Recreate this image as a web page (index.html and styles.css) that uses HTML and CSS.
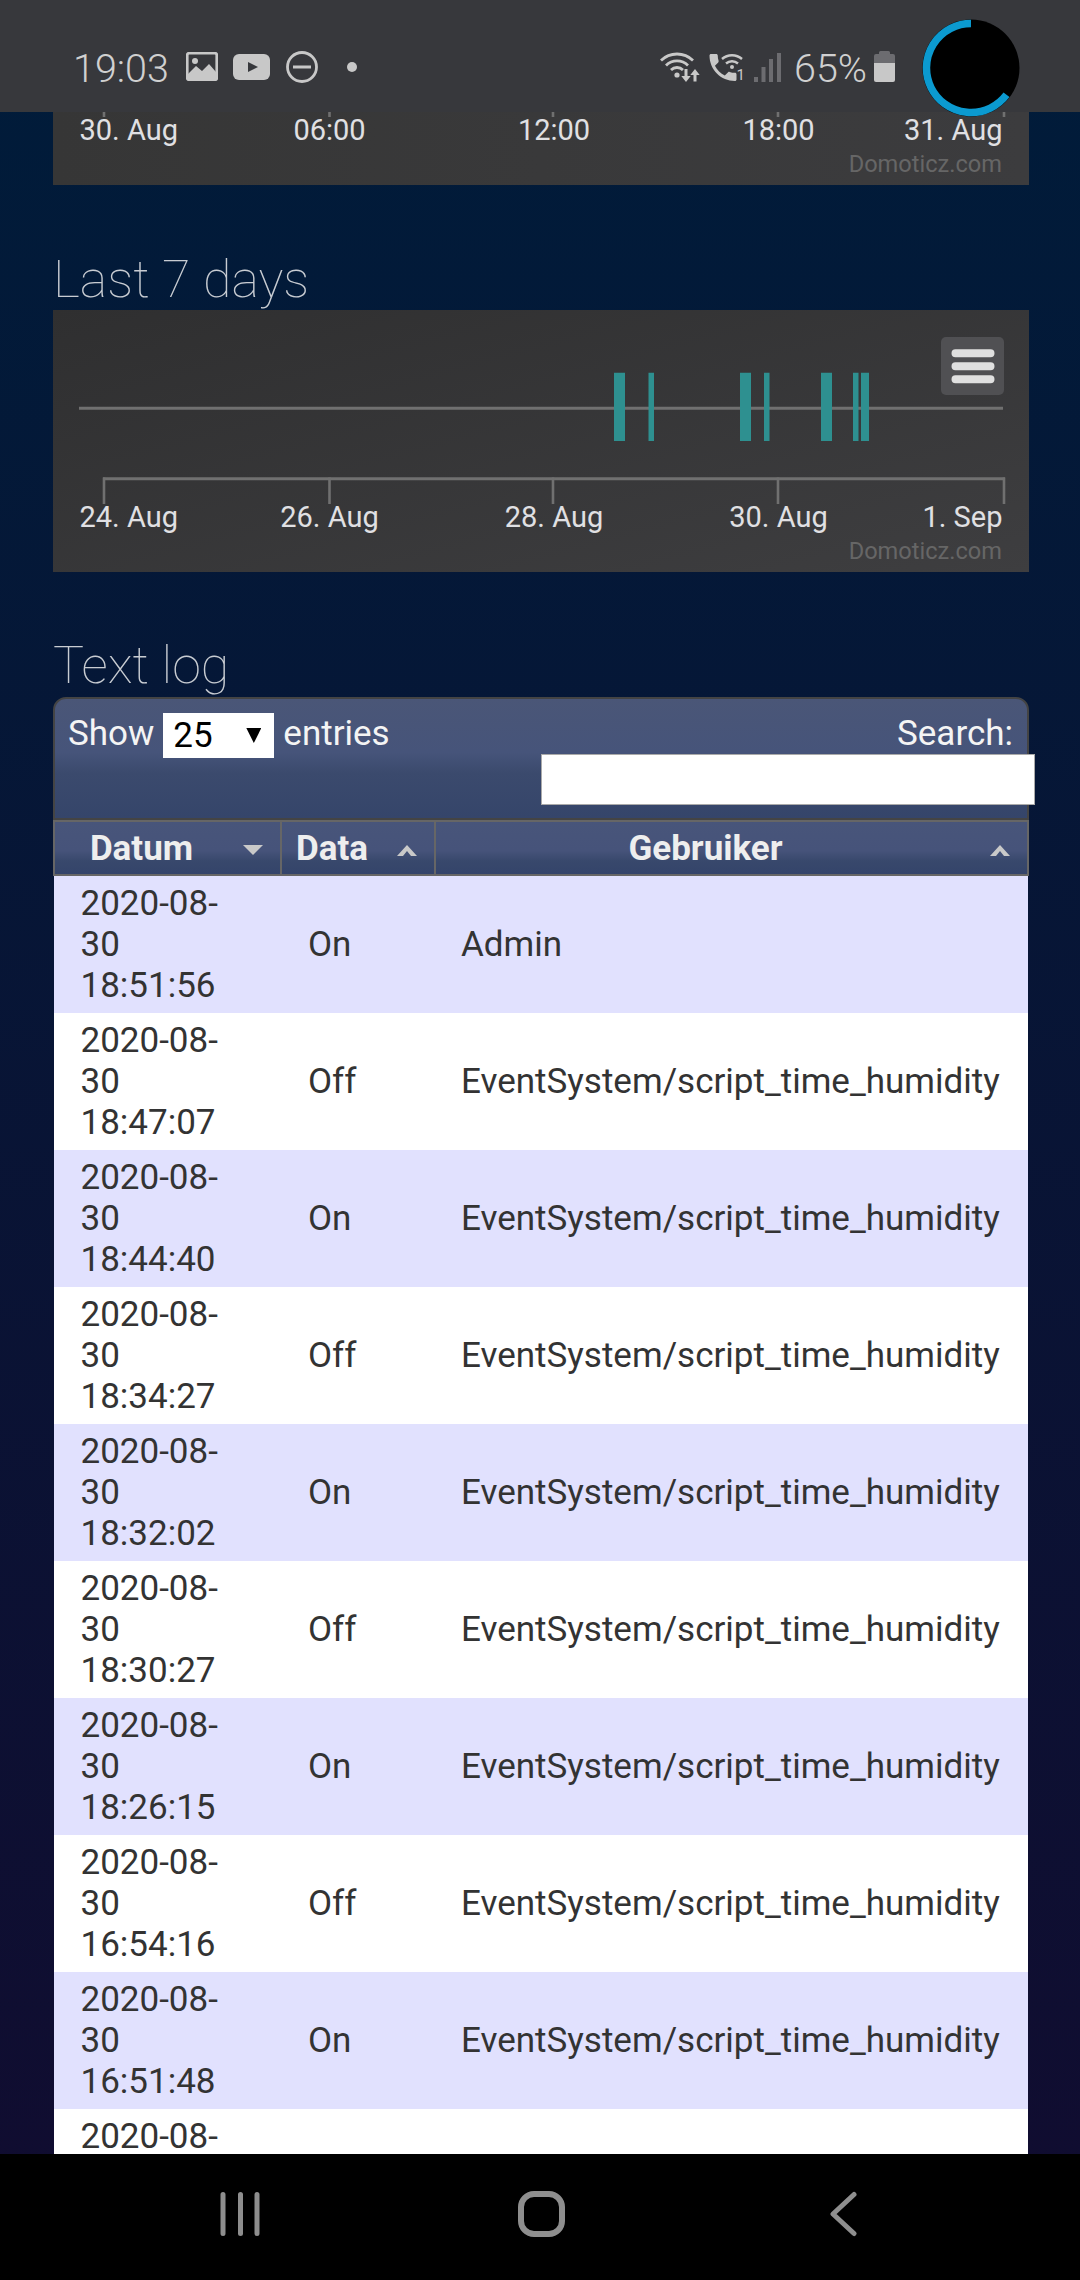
FILE: index.html
```html
<!DOCTYPE html>
<html lang="en">
<head>
<meta charset="utf-8">
<title>Domoticz log</title>
<link rel="stylesheet" href="styles.css">
</head>
<body>
<div class="screen">
  <header class="status">
    <div class="status-left">
      <span class="clock">19:03</span>
      <svg class="ic-image" width="32" height="29" viewBox="0 0 32 29"><rect x="1.200" y="1.200" width="29.600" height="26.600" rx="2" class="ic-stroke"/><circle cx="9" cy="9" r="3" class="ic-fill"/><path d="M2 25 L2 22 L10 14 L16 19 L23 12 L30 20 L30 27 L2 27Z" class="ic-fill"/></svg>
      <svg class="ic-yt" width="37" height="26" viewBox="0 0 37 26"><rect width="37" height="26" rx="6" class="ic-fill"/><path d="M15 8 L25 13 L15 18Z" class="ic-dark"/></svg>
      <svg class="ic-dnd" width="32" height="32" viewBox="0 0 32 32"><circle cx="16" cy="16" r="14.500" class="ic-stroke"/><rect x="7" y="14.500" width="18" height="3" class="ic-fill"/></svg>
      <span class="dot"></span>
    </div>
    <div class="status-right">
      <svg class="ic-wifi" width="42" height="31" viewBox="0 0 42 31"><path d="M2 9.500 A23 23 0 0 1 34 9.500 M7 14.500 A15.500 15.500 0 0 1 29 14.500 M12 19 A8.500 8.500 0 0 1 24 19" class="ic-stroke"/><circle cx="18" cy="24" r="2.600" class="ic-fill"/><path d="M25.500 18 h3 v7 h3.200 L27 31 L22.300 25 h3.200Z M36 18 L40.700 24 h-3.200 v6.500 h-3 V24 h-3.200Z" class="ic-fill"/></svg>
      <span class="call">
        <svg width="36" height="29" viewBox="0 0 36 29"><path transform="translate(-4 -3.500) scale(1.5)" d="M6.620 10.790c1.440 2.830 3.760 5.140 6.590 6.590l2.200-2.200c.27-.27.67-.36 1.020-.24 1.120.37 2.330.57 3.570.57.55 0 1 .45 1 1V20c0 .55-.45 1-1 1-9.390 0-17-7.610-17-17 0-.55.45-1 1-1h3.500c.55 0 1 .45 1 1 0 1.250.2 2.450.57 3.570.11.35.03.74-.25 1.020l-2.200 2.200z" class="ic-fill"/><path d="M13 6 A15 15 0 0 1 33 6 M17 10.500 A9 9 0 0 1 29 10.500" class="ic-thin"/><circle cx="23" cy="14" r="2" class="ic-fill"/></svg>
        <span class="call-sim">1</span>
      </span>
      <svg class="ic-signal" width="27" height="29" viewBox="0 0 27 29"><rect x="0" y="24" width="4" height="5" class="ic-dim"/><rect x="7.500" y="14" width="4" height="15" class="ic-dim"/><rect x="15" y="6" width="4" height="23" class="ic-dim"/><rect x="23" y="0" width="4" height="29" class="ic-dim"/></svg>
      <span class="pct">65%</span>
      <svg class="ic-batt" width="21" height="31" viewBox="0 0 21 31"><path d="M5 3 V1.500 Q5 0 6.500 0 H14.500 Q16 0 16 1.500 V3 H19 Q21 3 21 5 V12 H0 V5 Q0 3 2 3Z" class="ic-dim"/><path d="M0 12 H21 V29 Q21 31 19 31 H2 Q0 31 0 29Z" class="ic-fill"/></svg>
    </div>
    <svg class="bubble" width="98" height="98" viewBox="0 0 98 98"><circle cx="49" cy="49" r="48.500" class="bubble-disc"/><path d="M49 4.500 A44.500 44.500 0 1 0 84.500 75.800" class="bubble-arc"/></svg>
  </header>

  <main class="content">
    <section class="card card-top">
      <svg class="chart" width="976" height="73" viewBox="0 0 976 73">
        <path d="M51 0v5M276.500 0v5M500 0v5M725 0v5M951 0v5" class="tick"/>
        <text x="26.500" y="27.500" class="axis-label">30. Aug</text>
        <text x="276.500" y="27.500" class="axis-label mid">06:00</text>
        <text x="501" y="27.500" class="axis-label mid">12:00</text>
        <text x="725.500" y="27.500" class="axis-label mid">18:00</text>
        <text x="949.500" y="27.500" class="axis-label end">31. Aug</text>
        <text x="949" y="59.500" class="credit">Domoticz.com</text>
      </svg>
    </section>

    <h2 class="title title-week">Last 7 days</h2>
    <section class="card card-week">
      <svg class="chart" width="976" height="262" viewBox="0 0 976 262">
        <path d="M26 98.300H950" class="line"/>
        <path d="M561 62.700h11v68.300h-11z M595.500 62.700h5.500v68.300h-5.500z M687 62.700h11v68.300h-11z M711 62.700h5.500v68.300h-5.500z M768 62.700h11v68.300h-11z M800 62.700h5.500v68.300h-5.500z M808 62.700h8v68.300h-8z" class="bar"/>
        <path d="M50 168.700H952" class="line"/>
        <path d="M51 167.500v26.500M276.500 167.500v26.500M500 167.500v26.500M725 167.500v26.500M951 167.500v26.500" class="tick"/>
        <text x="26.500" y="216.700" class="axis-label">24. Aug</text>
        <text x="276.500" y="216.700" class="axis-label mid">26. Aug</text>
        <text x="501" y="216.700" class="axis-label mid">28. Aug</text>
        <text x="725.500" y="216.700" class="axis-label mid">30. Aug</text>
        <text x="949.500" y="216.700" class="axis-label end">1. Sep</text>
        <text x="949" y="249" class="credit">Domoticz.com</text>
        <rect x="888" y="27" width="63" height="58" rx="5" class="menu-bg"/>
        <path d="M902.500 43.300h35M902.500 56.300h35M902.500 69.300h35" class="menu-line"/>
      </svg>
    </section>

    <h2 class="title title-log">Text log</h2>
    <section class="log">
      <div class="toolbar">
        <label class="length">Show
          <span class="select-wrap"><select class="select"><option>25</option></select></span>
          entries</label>
        <label class="search"><span>Search:</span><input class="search-input" type="text"></label>
      </div>
      <table class="table">
        <colgroup><col class="col-date"><col class="col-data"><col class="col-user"></colgroup>
        <thead>
          <tr>
            <th>Datum<svg class="sort" width="20" height="12" viewBox="0 0 20 12"><path d="M0 1H20L10 11Z"/></svg></th>
            <th>Data<svg class="sort" width="20" height="12" viewBox="0 0 20 12"><path d="M0 12L10 1L20 12H14L10 7L6 12Z"/></svg></th>
            <th>Gebruiker<svg class="sort" width="20" height="12" viewBox="0 0 20 12"><path d="M0 12L10 1L20 12H14L10 7L6 12Z"/></svg></th>
          </tr>
        </thead>
        <tbody>
          <tr class="odd"><td>2020-08-30 18:51:56</td><td>On</td><td>Admin</td></tr>
          <tr><td>2020-08-30 18:47:07</td><td>Off</td><td>EventSystem/script_time_humidity</td></tr>
          <tr class="odd"><td>2020-08-30 18:44:40</td><td>On</td><td>EventSystem/script_time_humidity</td></tr>
          <tr><td>2020-08-30 18:34:27</td><td>Off</td><td>EventSystem/script_time_humidity</td></tr>
          <tr class="odd"><td>2020-08-30 18:32:02</td><td>On</td><td>EventSystem/script_time_humidity</td></tr>
          <tr><td>2020-08-30 18:30:27</td><td>Off</td><td>EventSystem/script_time_humidity</td></tr>
          <tr class="odd"><td>2020-08-30 18:26:15</td><td>On</td><td>EventSystem/script_time_humidity</td></tr>
          <tr><td>2020-08-30 16:54:16</td><td>Off</td><td>EventSystem/script_time_humidity</td></tr>
          <tr class="odd"><td>2020-08-30 16:51:48</td><td>On</td><td>EventSystem/script_time_humidity</td></tr>
          <tr><td class="cut">2020-08-</td><td></td><td></td></tr>
        </tbody>
      </table>
    </section>
  </main>

  <nav class="nav">
    <span class="nav-item"><svg width="40" height="46" viewBox="0 0 40 46"><path d="M3 3.500V42.500M20.500 3.500V42.500M37 3.500V42.500" class="nav-stroke"/></svg></span>
    <span class="nav-item"><svg width="47" height="46" viewBox="0 0 47 46"><rect x="3" y="3" width="41" height="40" rx="13" class="nav-stroke nav-home"/></svg></span>
    <span class="nav-item"><svg width="27" height="46" viewBox="0 0 27 46"><path d="M24 3.500L3 23L24 42.500" class="nav-stroke"/></svg></span>
  </nav>
</div>
</body>
</html>
```
FILE: styles.css
```css
* { box-sizing: border-box; }
html, body { margin: 0; padding: 0; background: #000; }
body { font-family: Roboto, "Liberation Sans", sans-serif; }

.screen {
  width: 1080px;
  height: 2280px;
  display: flex;
  flex-direction: column;
  overflow: hidden;
  background: linear-gradient(#001c3a, #110c30);
}

/* status bar */
.status {
  position: relative;
  z-index: 2;
  flex: 0 0 112px;
  display: flex;
  justify-content: space-between;
  align-items: flex-start;
  padding: 0 185px 0 73px;
  background: #37383c;
  color: #c8c8c8;
}
.status-left, .status-right { display: flex; align-items: flex-start; }
.status-left { padding-top: 51px; }
.status-right { padding-top: 51px; }
.clock { font-size: 39.5px; font-weight: 300; line-height: 37px; margin-top: -1px; width: 113px; color: #d0d0d0; }
.pct { font-size: 39.5px; font-weight: 300; line-height: 37px; margin: -1px 7px 0 13px; color: #d0d0d0; }
.ic-image { margin-top: 1px; }
.ic-yt { margin: 3px 0 0 15px; }
.ic-dnd { margin: 0 0 0 16px; }
.dot { width: 10px; height: 10px; margin: 11px 0 0 29px; border-radius: 50%; background: #c8c8c8; }
.ic-fill { fill: #c8c8c8; }
.ic-dark { fill: #37383c; }
.ic-dim { fill: #6c6c70; }
.ic-stroke { fill: none; stroke: #c8c8c8; stroke-width: 2.8; }
.ic-thin { fill: none; stroke: #c8c8c8; stroke-width: 2.4; }
.call { position: relative; display: block; width: 36px; height: 31px; margin: 2px 0 0 8px; }
.call svg { display: block; }
.call-sim { position: absolute; right: 0; bottom: 1px; font-size: 15px; line-height: 15px; }
.ic-signal { margin: 2px 0 0 9px; }
.bubble { position: absolute; left: 922px; top: 19px; }
.bubble-disc { fill: #000; }
.bubble-arc { fill: none; stroke: #0b9ad0; stroke-width: 7.5; }

/* page */
.content {
  flex: 1 1 0;
  min-height: 0;
  overflow: hidden;
  padding: 0 51px 0 53px;
}
.card {
  width: 976px;
  background: linear-gradient(to bottom right, #2f2f30, #3e3e40);
}
.card-top { height: 73px; background: linear-gradient(to right, #363636, #3c3c3e); }
.card-week { height: 262px; }
.chart { display: block; }
.title {
  margin: 0;
  font-size: 52px;
  line-height: 60px;
  font-weight: 100;
  color: #c8ccd2;
}
.title-week { padding-top: 65px; }
.title-log { padding-top: 64px; margin-bottom: 1px; }

.axis-label { font-size: 29px; fill: #e0e0e3; }
.mid { text-anchor: middle; }
.end { text-anchor: end; }
.credit { font-size: 23.6px; fill: #666; text-anchor: end; }
.tick { stroke: #707070; stroke-width: 2.6; fill: none; }
.line { stroke: #707070; stroke-width: 3; fill: none; }
.bar { fill: #2e9090; }
.menu-bg { fill: #505053; }
.menu-line { stroke: #e0e0e0; stroke-width: 8; stroke-linecap: round; fill: none; }

/* log table */
.log { width: 976px; }
.toolbar {
  height: 123px;
  display: flex;
  justify-content: space-between;
  align-items: flex-start;
  padding: 14px 14px 0 13px;
  border: 2px solid #444;
  border-radius: 13px 13px 0 0;
  color: #f4f4f4;
  font-size: 35px;
  line-height: 41px;
  background: linear-gradient(#4a5677, #46547a 45%, #3b4a6d 62%, #35456a);
}
.length { display: flex; align-items: flex-start; gap: 9px; white-space: nowrap; }
.select-wrap { position: relative; display: block; width: 111px; height: 45px; background: #fff; }
.select-wrap::after {
  content: "";
  position: absolute;
  left: 83px;
  top: 15px;
  width: 15px;
  height: 15px;
  background: #000;
  clip-path: polygon(0 0, 100% 0, 50% 100%);
}
.select {
  display: block;
  width: 100%;
  height: 100%;
  padding: 0 0 0 10px;
  border: 0;
  border-radius: 0;
  appearance: none;
  background: transparent;
  color: #000;
  font: inherit;
  font-size: 35px;
}
.search { display: flex; flex-direction: column; align-items: flex-end; }
.search span { display: block; height: 41px; }
.search-input {
  display: block;
  width: 494px;
  height: 51px;
  margin: 0 -22px 0 0;
  border: 1px solid #aaa;
  border-radius: 0;
  background: #fff;
}
.table {
  width: 976px;
  table-layout: fixed;
  border-collapse: separate;
  border-spacing: 0;
  font-size: 35px;
  line-height: 41px;
}
.col-date { width: 227px; }
.col-data { width: 154px; }
.col-user { width: 595px; }
.table th {
  position: relative;
  height: 56px;
  padding: 0 52px 0 0;
  border: 2px solid #666;
  border-right: 0;
  color: #eee;
  font-weight: 700;
  text-align: center;
  background: linear-gradient(#48557a, #46537a 55%, #38486c 75%, #34446a);
}
.table th:last-child { border-right: 2px solid #666; }
.sort { position: absolute; right: 17px; top: 22px; fill: #c9c9c9; }
.table td {
  padding: 7px 27px;
  color: #333;
  background: #fff;
  background-clip: padding-box;
  vertical-align: middle;
  white-space: nowrap;
}
.table td:nth-child(2) { padding-left: 28px; }
.table tr.odd td { background-color: #e1e1fe; }
.table td:first-child { padding-left: 26.5px; padding-right: 40px; border-left: 1px solid transparent; white-space: normal; }
.table td:last-child { padding-right: 0; border-right: 1px solid transparent; }
.table td.cut { vertical-align: top; height: 137px; }

/* nav bar */
.nav {
  flex: 0 0 126px;
  display: flex;
  justify-content: center;
  align-items: flex-start;
  padding: 37px 0 0 3px;
  background: #000;
}
.nav-item { flex: 0 0 302px; display: flex; justify-content: center; }
.nav-stroke { fill: none; stroke: #8e8e8e; stroke-width: 5; stroke-linecap: round; stroke-linejoin: round; }
.nav-home { stroke-width: 6; }
```
